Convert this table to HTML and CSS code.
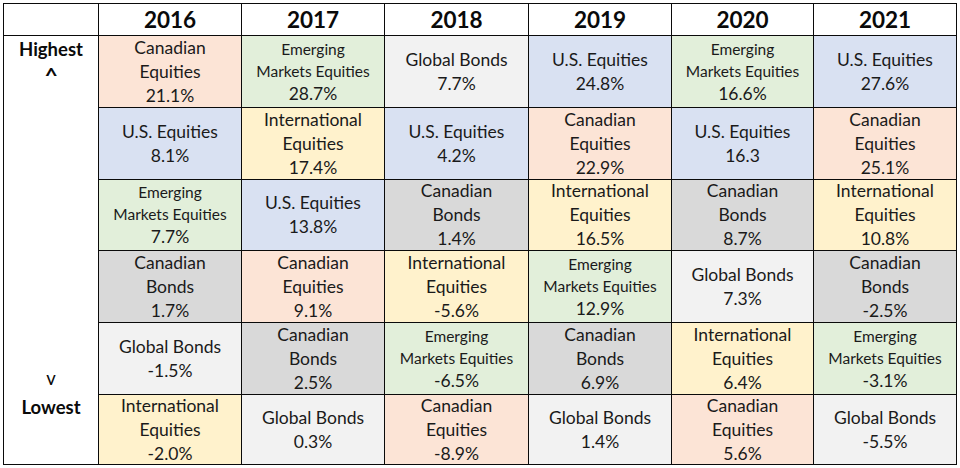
FILE: index.html
```html
<!DOCTYPE html>
<html lang="en">
<head>
<meta charset="utf-8">
<title>Asset class returns 2016-2021</title>
<link rel="stylesheet" href="styles.css">
</head>
<body>
<div class="board">
  <div class="cell head"></div>
  <div class="cell head">2016</div>
  <div class="cell head">2017</div>
  <div class="cell head">2018</div>
  <div class="cell head">2019</div>
  <div class="cell head">2020</div>
  <div class="cell head">2021</div>

  <div class="cell rank">
    <div class="rank-top"><span>Highest</span><span class="caret">^</span></div>
    <div class="rank-bottom"><span class="vee">v</span><span>Lowest</span></div>
  </div>

  <!-- row 1 -->
  <div class="cell ce"><span>Canadian</span><span>Equities</span><span>21.1%</span></div>
  <div class="cell em"><span class="sm">Emerging</span><span class="sm">Markets Equities</span><span>28.7%</span></div>
  <div class="cell gb"><span>Global Bonds</span><span>7.7%</span></div>
  <div class="cell us"><span>U.S. Equities</span><span>24.8%</span></div>
  <div class="cell em"><span class="sm">Emerging</span><span class="sm">Markets Equities</span><span>16.6%</span></div>
  <div class="cell us"><span>U.S. Equities</span><span>27.6%</span></div>

  <!-- row 2 -->
  <div class="cell us"><span>U.S. Equities</span><span>8.1%</span></div>
  <div class="cell ie"><span>International</span><span>Equities</span><span>17.4%</span></div>
  <div class="cell us"><span>U.S. Equities</span><span>4.2%</span></div>
  <div class="cell ce"><span>Canadian</span><span>Equities</span><span>22.9%</span></div>
  <div class="cell us"><span>U.S. Equities</span><span>16.3</span></div>
  <div class="cell ce"><span>Canadian</span><span>Equities</span><span>25.1%</span></div>

  <!-- row 3 -->
  <div class="cell em"><span class="sm">Emerging</span><span class="sm">Markets Equities</span><span>7.7%</span></div>
  <div class="cell us"><span>U.S. Equities</span><span>13.8%</span></div>
  <div class="cell cb"><span>Canadian</span><span>Bonds</span><span>1.4%</span></div>
  <div class="cell ie"><span>International</span><span>Equities</span><span>16.5%</span></div>
  <div class="cell cb"><span>Canadian</span><span>Bonds</span><span>8.7%</span></div>
  <div class="cell ie"><span>International</span><span>Equities</span><span>10.8%</span></div>

  <!-- row 4 -->
  <div class="cell cb"><span>Canadian</span><span>Bonds</span><span>1.7%</span></div>
  <div class="cell ce"><span>Canadian</span><span>Equities</span><span>9.1%</span></div>
  <div class="cell ie"><span>International</span><span>Equities</span><span>-5.6%</span></div>
  <div class="cell em"><span class="sm">Emerging</span><span class="sm">Markets Equities</span><span>12.9%</span></div>
  <div class="cell gb"><span>Global Bonds</span><span>7.3%</span></div>
  <div class="cell cb"><span>Canadian</span><span>Bonds</span><span>-2.5%</span></div>

  <!-- row 5 -->
  <div class="cell gb"><span>Global Bonds</span><span>-1.5%</span></div>
  <div class="cell cb"><span>Canadian</span><span>Bonds</span><span>2.5%</span></div>
  <div class="cell em"><span class="sm">Emerging</span><span class="sm">Markets Equities</span><span>-6.5%</span></div>
  <div class="cell cb"><span>Canadian</span><span>Bonds</span><span>6.9%</span></div>
  <div class="cell ie"><span>International</span><span>Equities</span><span>6.4%</span></div>
  <div class="cell em"><span class="sm">Emerging</span><span class="sm">Markets Equities</span><span>-3.1%</span></div>

  <!-- row 6 -->
  <div class="cell ie"><span>International</span><span>Equities</span><span>-2.0%</span></div>
  <div class="cell gb"><span>Global Bonds</span><span>0.3%</span></div>
  <div class="cell ce"><span>Canadian</span><span>Equities</span><span>-8.9%</span></div>
  <div class="cell gb"><span>Global Bonds</span><span>1.4%</span></div>
  <div class="cell ce"><span>Canadian</span><span>Equities</span><span>5.6%</span></div>
  <div class="cell gb"><span>Global Bonds</span><span>-5.5%</span></div>
</div>
</body>
</html>
```

FILE: styles.css
```css
html, body {
  margin: 0;
  padding: 0;
  background: #ffffff;
}

body {
  padding: 3px;
  font-family: "Lato", "Open Sans", "Liberation Sans", sans-serif;
  color: #1a1a1a;
}

.board {
  display: grid;
  grid-template-columns: 95px 143px 143px 144px 143px 142px 143px;
  grid-template-rows: 32px 72px 72px 71px 72px 72px 70px;
  width: 954px;
  border-top: 1px solid #0a0a0a;
  border-left: 1px solid #0a0a0a;
  box-sizing: border-box;
}

.cell {
  box-sizing: border-box;
  border-right: 1px solid #0a0a0a;
  border-bottom: 1px solid #0a0a0a;
  display: flex;
  flex-direction: column;
  align-items: center;
  justify-content: center;
  text-align: center;
  font-size: 17.5px;
  line-height: 24px;
  white-space: nowrap;
}

.head {
  font-weight: 700;
  font-size: 22.5px;
  line-height: 32px;
  color: #0a0a0a;
}

.rank {
  grid-column: 1;
  grid-row: 2 / span 6;
  justify-content: space-between;
  padding: 1px 0 45px;
  font-weight: 700;
  font-size: 18.5px;
  color: #0a0a0a;
}

.rank-top,
.rank-bottom {
  display: flex;
  flex-direction: column;
  align-items: center;
}

.caret {
  font-size: 21px;
  line-height: 24px;
  transform: scaleX(1.1) translateY(2px);
}

.vee {
  font-weight: 400;
  line-height: 30px;
  transform: translateY(-2px);
}

.sm {
  font-size: 15.5px;
  line-height: 22px;
}

.ce { background: #fce4d6; }
.em { background: #e2efda; }
.gb { background: #f2f2f2; }
.us { background: #d9e1f2; }
.ie { background: #fff2cc; }
.cb { background: #d9d9d9; }
```
